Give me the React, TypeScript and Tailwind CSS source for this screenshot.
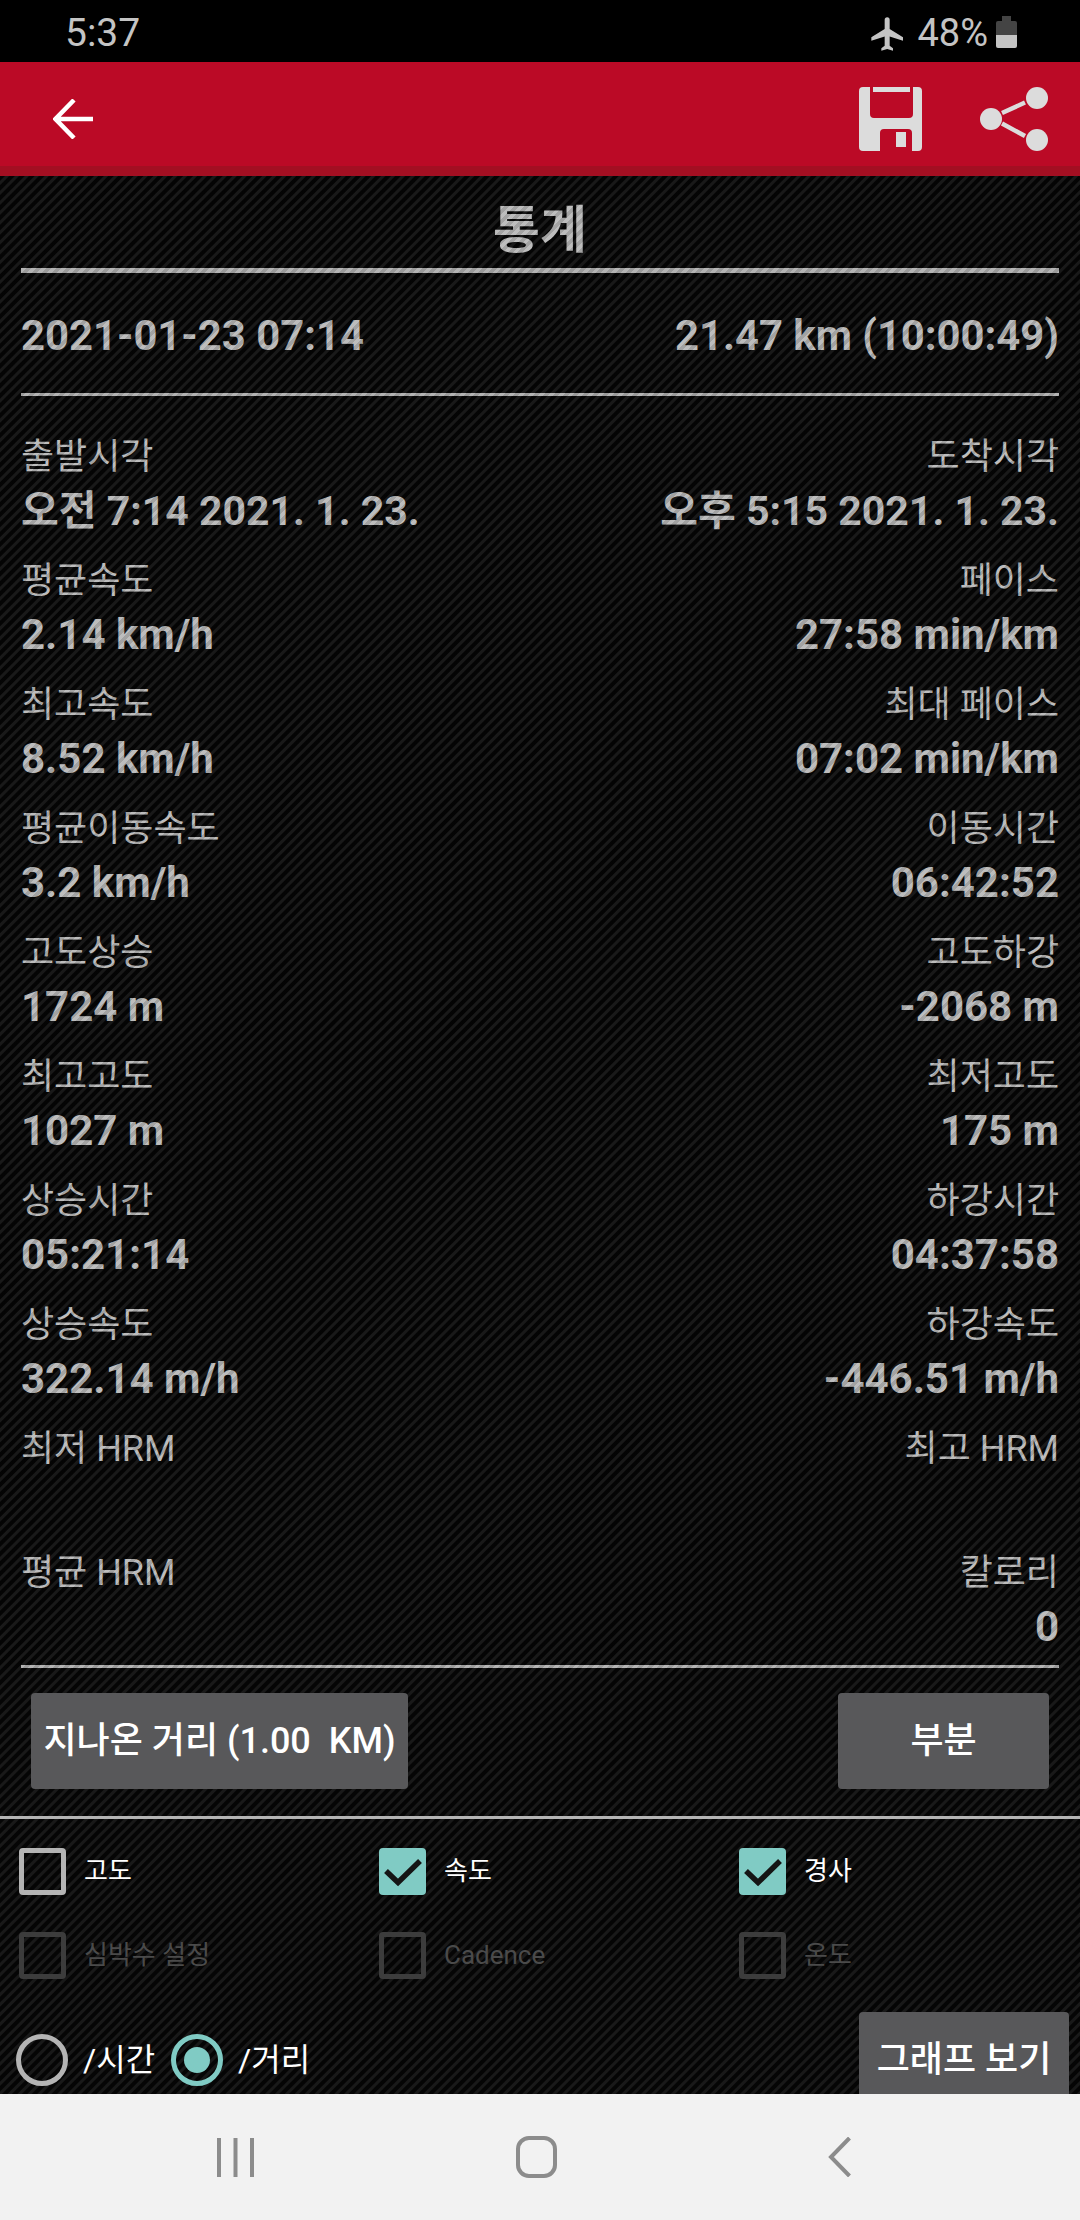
import React from 'react';

const stats = [
  ['출발시각', '오전 7:14 2021. 1. 23.', '도착시각', '오후 5:15 2021. 1. 23.'],
  ['평균속도', '2.14 km/h', '페이스', '27:58 min/km'],
  ['최고속도', '8.52 km/h', '최대 페이스', '07:02 min/km'],
  ['평균이동속도', '3.2 km/h', '이동시간', '06:42:52'],
  ['고도상승', '1724 m', '고도하강', '-2068 m'],
  ['최고고도', '1027 m', '최저고도', '175 m'],
  ['상승시간', '05:21:14', '하강시간', '04:37:58'],
  ['상승속도', '322.14 m/h', '하강속도', '-446.51 m/h'],
  ['최저 HRM', '', '최고 HRM', ''],
  ['평균 HRM', '', '칼로리', '0'],
];

function Check({ label, checked, disabled }: { label: string; checked?: boolean; disabled?: boolean }) {
  return (
    <div className="flex items-center h-[47px]">
      {checked ? (
        <div className="w-[47px] h-[47px] rounded-[4px] bg-[#80cbc4]">
          <svg className="w-[47px] h-[47px]" viewBox="0 0 47 47" fill="none" stroke="#151515" strokeWidth="5.500">
            <path d="M7 23l12 11.500L41 13" />
          </svg>
        </div>
      ) : (
        <div className={`w-[47px] h-[47px] rounded-[4px] border-[5px] ${disabled ? 'border-[#3c3c3c]' : 'border-[#b4b4b4]'}`} />
      )}
      <span className={`ml-[18px] text-[26px] ${disabled ? 'text-[#4a4a4a]' : 'text-white'}`}>{label}</span>
    </div>
  );
}

function Radio({ label, checked }: { label: string; checked?: boolean }) {
  return (
    <div className="flex items-center">
      <div className={`w-[52px] h-[52px] rounded-full border-[5px] flex items-center justify-center ${checked ? 'border-[#80cbc4]' : 'border-[#b4b4b4]'}`}>
        {checked && <div className="w-[26px] h-[26px] rounded-full bg-[#80cbc4]" />}
      </div>
      <span className="ml-[15px] text-[32px] text-white">{label}</span>
    </div>
  );
}

export default function App() {
  return (
    <div className="w-[1080px] h-[2220px] flex flex-col bg-black font-['Roboto','Noto_Sans_CJK_KR',sans-serif] overflow-hidden">
      {/* Status bar */}
      <div className="h-[62px] shrink-0 flex items-center justify-between pt-[5px] pl-[65px] pr-[63px] text-[#c4c4c4] text-[39px]">
        <span>5:37</span>
        <div className="flex items-center">
          <svg className="w-[40px] h-[40px] mr-[9px]" viewBox="0 0 24 24" fill="currentColor">
            <path d="M21 16v-2l-8-5V3.500a1.500 1.500 0 0 0-3 0V9l-8 5v2l8-2.500V19l-2 1.500V22l3.500-1 3.500 1v-1.500L13 19v-5.500z" />
          </svg>
          <span className="text-[38px]">48%</span>
          <div className="ml-[8px] w-[21px] h-[32px] mt-[-4px] flex flex-col items-center">
            <div className="w-[9px] h-[5px] bg-[#444]" />
            <div className="w-[21px] h-[14px] bg-[#444] rounded-t-[2px]" />
            <div className="w-[21px] h-[13px] bg-[#c4c4c4] rounded-b-[2px]" />
          </div>
        </div>
      </div>

      {/* Toolbar */}
      <div className="h-[114px] bg-[#bb0a26] border-b-[10px] border-[#a30f22] flex items-center pt-[10px] pl-[53px] pr-[32px] shrink-0">
        <svg className="w-[40px] h-[40px]" viewBox="0 0 40 40" fill="none" stroke="#fff" strokeWidth="4.500">
          <path d="M40 20H3M21 1L2.500 20 21 39" />
        </svg>
        <div className="flex-1" />
        <svg className="w-[63px] h-[64px] mr-[58px]" viewBox="0 0 63 64" fill="#dcdcdc">
          <path d="M4 0H11V27a4 4 0 0 0 4 4H50a4 4 0 0 0 4-4V0h5a4 4 0 0 1 4 4V60a4 4 0 0 1-4 4H53V46a4 4 0 0 0-4-4H25a4 4 0 0 0-4 4V64H4a4 4 0 0 1-4-4V4a4 4 0 0 1 4-4z" />
          <path d="M14 0h37v5H14zM37 45h10v15H37z" />
        </svg>
        <svg className="w-[68px] h-[64px]" viewBox="0 0 68 64" fill="#dcdcdc">
          <circle cx="11" cy="32" r="11" />
          <circle cx="57" cy="11" r="11" />
          <circle cx="57" cy="53" r="11" />
          <path d="M22 26l23-10.500M22 36.500L45 49" stroke="#dcdcdc" strokeWidth="4.500" />
        </svg>
      </div>

      {/* Main content */}
      <div className="relative flex-1 flex flex-col min-h-0 overflow-hidden bg-[repeating-linear-gradient(135deg,#050505_0px,#050505_3px,#191919_4px,#191919_6px,#050505_7px)]">
        <div className="relative flex flex-col">
          <h1 className="text-center text-[51px] leading-[60px] mt-[25px] font-bold text-[#bdbdbd]">통계</h1>
          <div className="mx-[21px] mt-[7px] h-[5px] bg-[#b4b4b4]" />

          <div className="mx-[21px] mt-[38px] flex justify-between text-[41.800px] leading-[50px] font-bold text-[#bdbdbd]">
            <span>2021-01-23 07:14</span>
            <span>21.47 km (10:00:49)</span>
          </div>
          <div className="mx-[21px] mt-[32px] h-[3px] bg-[#b4b4b4]" />

          <div className="mx-[21px] mt-[35px] flex flex-col">
            {stats.map(([leftLabel, leftValue, rightLabel, rightValue], i) => (
              <div key={leftLabel} className="h-[124px] flex justify-between text-[#bdbdbd]">
                <div className="flex flex-col">
                  <span className="text-[36px] leading-[52px]">{leftLabel}</span>
                  <span className={`leading-[56px] font-bold ${i === 0 ? 'text-[41px]' : 'text-[42px]'}`}>{leftValue}</span>
                </div>
                <div className="flex flex-col items-end">
                  <span className="text-[36px] leading-[52px]">{rightLabel}</span>
                  <span className={`leading-[56px] font-bold ${i === 0 ? 'text-[41px]' : 'text-[42px]'}`}>{rightValue}</span>
                </div>
              </div>
            ))}
          </div>

          <div className="mx-[21px] mt-[-6px] h-[3px] bg-[#b4b4b4]" />

          {/* faint weave showing through the text */}
          <div className="absolute inset-0 pointer-events-none bg-[repeating-linear-gradient(135deg,rgba(0,0,0,0.14)_0px,rgba(0,0,0,0.14)_3.500px,transparent_3.500px,transparent_7px)]" />
        </div>

        <div className="mx-[31px] mt-[25px] flex justify-between">
          <div className="w-[377px] h-[96px] rounded-[4px] bg-[#58585a] text-white text-[36px] font-medium flex items-center justify-center whitespace-pre">
            지나온 거리 (1.00  KM)
          </div>
          <div className="w-[211px] h-[96px] rounded-[4px] bg-[#58585a] text-white text-[36px] font-medium flex items-center justify-center">
            부분
          </div>
        </div>

        <div className="mt-[27px] h-[3px] bg-[#b4b4b4]" />

        <div className="ml-[19px] mt-[29px] grid grid-cols-[360px_360px_1fr] gap-y-[37px]">
          <Check label="고도" />
          <Check label="속도" checked />
          <Check label="경사" checked />
          <Check label="심박수 설정" disabled />
          <Check label="Cadence" disabled />
          <Check label="온도" disabled />
        </div>

        <div className="flex-1 min-h-0 flex items-end justify-between pl-[16px] pr-[11px]">
          <div className="flex items-center gap-[16px] mb-[8px]">
            <Radio label="/시간" />
            <Radio label="/거리" checked />
          </div>
          <div className="w-[210px] h-[96px] mb-[-14px] rounded-t-[4px] bg-[#58585a] text-white text-[36px] font-medium flex items-center justify-center">
            그래프 보기
          </div>
        </div>
      </div>

      {/* Navigation bar */}
      <div className="h-[126px] bg-[#f2f2f2] flex items-center pl-[217px] shrink-0">
        <svg className="w-[37px] h-[39px]" viewBox="0 0 37 39" stroke="#8c8c8c" strokeWidth="4">
          <path d="M2 0v39M18.500 0v39M35 0v39" />
        </svg>
        <div className="ml-[262px] w-[41px] h-[42px] border-[4px] border-[#8c8c8c] rounded-[13px]" />
        <svg className="ml-[271px] w-[23px] h-[40px]" viewBox="0 0 23 40" fill="none" stroke="#8c8c8c" strokeWidth="4">
          <path d="M21.500 1L3 20l18.500 19" />
        </svg>
      </div>
    </div>
  );
}
